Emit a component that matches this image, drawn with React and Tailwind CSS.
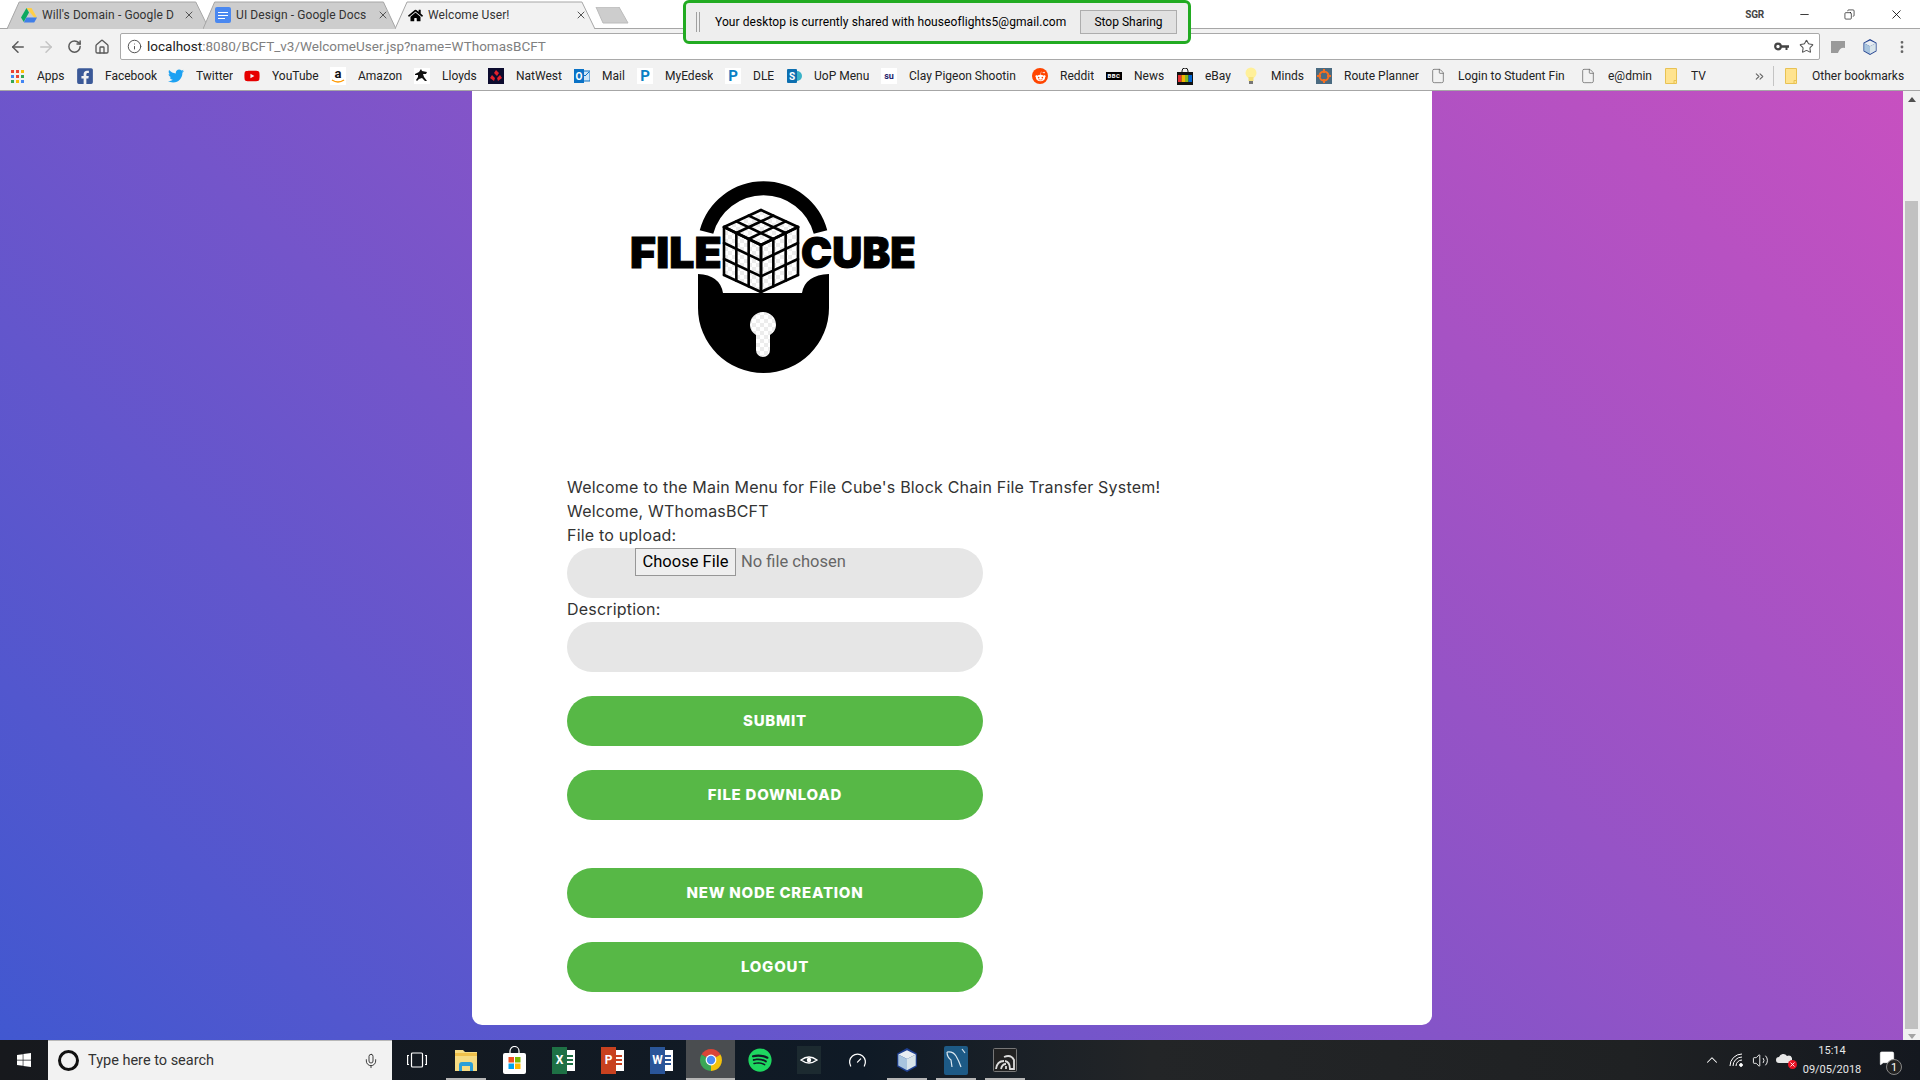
import React from 'react';
import {
  ArrowLeft, ArrowRight, RotateCw, Home, Info, Star, X, Minus, Mic, ChevronUp,
  Volume2, Copy, EllipsisVertical, ChevronsRight, File, Gauge, MessageSquare,
} from 'lucide-react';
import { FaFacebookSquare, FaTwitter, FaYoutube, FaRedditAlien, FaWindows, FaSpotify, FaHome } from 'react-icons/fa';

const DriveIcon = () => (
  <svg width="16" height="15" viewBox="0 0 16 15">
    <polygon points="5.5,0 10.5,0 16,9.5 13.2,9.5" fill="#ffcf48" />
    <polygon points="5.5,0 8,4.6 2.8,14 0,9.5" fill="#0da960" />
    <polygon points="2.8,14.5 5.4,9.5 16,9.5 13.2,14.5" fill="#3f7ee8" />
  </svg>
);

const DocsIcon = () => (
  <div className="w-4 h-4 rounded-[2px] bg-[#4a88f0] flex flex-col gap-[2px] justify-center px-[3px]">
    <div className="h-px bg-white" />
    <div className="h-px bg-white" />
    <div className="h-px bg-white w-2/3" />
  </div>
);

const AppsIcon = () => {
  const cols = ['#ea4335', '#ea4335', '#fbbc05', '#4285f4', '#ea4335', '#34a853', '#34a853', '#fbbc05', '#4285f4'];
  return (
    <div className="w-[13px] h-[13px] grid grid-cols-3 gap-[2px]">
      {cols.map((c, i) => (
        <svg key={i} width="3" height="3"><rect width="3" height="3" fill={c} /></svg>
      ))}
    </div>
  );
};

const Badge = ({ className, children }) => (
  <div className={`w-4 h-4 flex items-center justify-center font-bold leading-none ${className}`}>{children}</div>
);

const AmazonIcon = () => (
  <svg width="16" height="18" viewBox="0 0 16 18">
    <rect width="16" height="18" fill="#fff" />
    <text x="8" y="11" textAnchor="middle" fontSize="13" fontWeight="700" fill="#111" fontFamily="Roboto, sans-serif">a</text>
    <path d="M2 13q6 4 12 0" fill="none" stroke="#f90" strokeWidth="1.5" />
  </svg>
);

const LloydsIcon = () => (
  <svg width="16" height="16" viewBox="0 0 16 16">
    <rect width="16" height="16" fill="#fff" />
    <path d="M1 6l4-2 2-3 1 2 5 1-1 2-3 0 1 3 3 4-2 0-3-3-3 1-2 2-1-1 2-3 0-2-3 0z" fill="#111" />
  </svg>
);

const NatWestIcon = () => (
  <svg width="16" height="16" viewBox="0 0 16 16">
    <rect width="16" height="16" fill="#0c0b2e" />
    <path d="M8 2l3 3-2 3-3-3zM4 7l3 3-1 3-4-3zM12 7l2 3-4 3-1-3z" fill="#e4202c" />
  </svg>
);

const ShareIcon = () => (
  <svg width="16" height="16" viewBox="0 0 16 16">
    <circle cx="11" cy="8" r="5" fill="#3ab2c8" />
    <rect x="1" y="1" width="10" height="14" rx="1" fill="#0d6fb0" />
    <text x="6" y="12" textAnchor="middle" fontSize="10" fontWeight="700" fill="#fff" fontFamily="Roboto, sans-serif">S</text>
  </svg>
);

const OutlookIcon = () => (
  <svg width="16" height="16" viewBox="0 0 16 16">
    <rect x="6" y="3" width="10" height="10" fill="#cfe6f7" stroke="#0a72c6" />
    <path d="M7 4l4 4 4-4" fill="none" stroke="#0a72c6" />
    <rect y="1" width="10" height="14" fill="#0a72c6" />
    <text x="5" y="12" textAnchor="middle" fontSize="10" fontWeight="700" fill="#fff" fontFamily="Roboto, sans-serif">O</text>
  </svg>
);

const BbcIcon = () => (
  <div className="w-4 h-2 bg-black flex items-center justify-center text-white text-[6px] font-bold leading-none tracking-[0.5px]">BBC</div>
);

const BagIcon = () => (
  <svg width="16" height="17" viewBox="0 0 16 17">
    <path d="M5 5V3a3 3 0 0 1 6 0v2" stroke="#111" fill="none" />
    <rect y="4" width="16" height="13" fill="#111" />
    <rect x="1" y="7" width="3.5" height="7" fill="#e53238" />
    <rect x="4.5" y="7" width="3.5" height="7" fill="#f5af02" />
    <rect x="8" y="7" width="3.5" height="7" fill="#86b817" />
    <rect x="11.5" y="7" width="3.5" height="7" fill="#0064d2" />
  </svg>
);

const BulbIcon = () => (
  <svg width="12" height="18" viewBox="0 0 12 18">
    <circle cx="6" cy="6" r="5.5" fill="#fff09a" />
    <rect x="3.5" y="10" width="5" height="4" fill="#f6e27a" />
    <rect x="4" y="14" width="4" height="3" fill="#777" />
  </svg>
);

const RouteIcon = () => (
  <svg width="16" height="16" viewBox="0 0 16 16">
    <rect width="16" height="16" fill="#4a6a80" />
    <circle cx="8" cy="8" r="4.5" fill="none" stroke="#f36f21" strokeWidth="2" />
    <path d="M8 1v4M8 11v4M1 8h4M11 8h4" stroke="#f36f21" strokeWidth="2" />
  </svg>
);

const YellowFolder = () => (
  <svg width="12" height="16" viewBox="0 0 12 16">
    <path d="M.5.5h11v15H.5z" fill="#ffe38f" stroke="#e8c254" />
    <path d="M9 15.5v-3h2.5" fill="none" stroke="#e8c254" />
  </svg>
);
const PageIcon = () => <File size={16} strokeWidth={1} className="text-[#555]" />;

const KeyIcon = () => (
  <svg width="15" height="9" viewBox="0 0 15 9">
    <circle cx="4" cy="4.5" r="2.8" fill="none" stroke="#444" strokeWidth="2.2" />
    <path d="M6.5 3.2H15V5.8H13.5V8H11.5V5.8H6.5z" fill="#444" />
  </svg>
);

// icon column + label, widths are the distance to the next bookmark
const bookmarks = [
  { label: 'Apps', w: 'w-[68px]', icon: <AppsIcon /> },
  { label: 'Facebook', w: 'w-[91px]', icon: <FaFacebookSquare size={18} className="text-[#3b5998]" /> },
  { label: 'Twitter', w: 'w-[76px]', icon: <FaTwitter size={16} className="text-[#1da1f2]" /> },
  { label: 'YouTube', w: 'w-[86px]', icon: <FaYoutube size={16} className="text-[#e60000]" /> },
  { label: 'Amazon', w: 'w-[84px]', icon: <AmazonIcon /> },
  { label: 'Lloyds', w: 'w-[74px]', icon: <LloydsIcon /> },
  { label: 'NatWest', w: 'w-[86px]', icon: <NatWestIcon /> },
  { label: 'Mail', w: 'w-[63px]', icon: <OutlookIcon /> },
  { label: 'MyEdesk', w: 'w-[88px]', icon: <Badge className="bg-white text-[#0a7fc4] text-[15px]">P</Badge> },
  { label: 'DLE', w: 'w-[61px]', icon: <Badge className="bg-white text-[#0a7fc4] text-[15px]">P</Badge> },
  { label: 'UoP Menu', w: 'w-[95px]', icon: <ShareIcon /> },
  { label: 'Clay Pigeon Shootin', w: 'w-[151px]', icon: <Badge className="bg-white text-[#1c1c6b] text-[9px]">su</Badge> },
  { label: 'Reddit', w: 'w-[74px]', icon: <Badge className="bg-[#ff4500] rounded-full text-white"><FaRedditAlien size={11} /></Badge> },
  { label: 'News', w: 'w-[71px]', icon: <BbcIcon /> },
  { label: 'eBay', w: 'w-[66px]', icon: <BagIcon /> },
  { label: 'Minds', w: 'w-[73px]', icon: <BulbIcon /> },
  { label: 'Route Planner', w: 'w-[114px]', icon: <RouteIcon /> },
  { label: 'Login to Student Fin', w: 'w-[150px]', icon: <PageIcon /> },
  { label: 'e@dmin', w: 'w-[83px]', icon: <PageIcon /> },
  { label: 'TV', w: 'w-[70px]', icon: <YellowFolder /> },
];

const TabShape = ({ active }) => (
  <svg className="absolute inset-0 w-full h-full" viewBox="0 0 200 28" preserveAspectRatio="none">
    <path
      d="M0 28 L12 1 L186 1 L199 28"
      fill={active ? '#f2f2f2' : '#cdcdcd'}
      stroke="#a6a6a6"
      strokeWidth="1"
      vectorEffect="non-scaling-stroke"
    />
  </svg>
);

const Tab = ({ className, pad, icon, title, textW, active, closePad }) => (
  <div className={`relative h-[28px] shrink-0 ${className}`}>
    <TabShape active={active} />
    <div className={`relative h-full flex items-center text-[12px] text-[#333] ${pad}`}>
      <div className="w-4 h-4 flex items-center justify-center shrink-0">{icon}</div>
      <span className={`ml-[5px] whitespace-nowrap overflow-hidden tracking-[0.1px] ${textW}`}>{title}</span>
      <X size={12} strokeWidth={2} className={`text-[#555] shrink-0 ${closePad}`} />
    </div>
  </div>
);

const ShareBar = () => (
  <div className="absolute left-[683px] top-0 w-[508px] h-[44px] z-10 bg-[#eeeeee] border-[3px] border-[#22ab22] rounded-[6px] flex items-center font-['Roboto',sans-serif] text-[12px] text-black">
    <div className="ml-[10px] w-[4px] h-[20px] border-x border-[#a0a0a0]" />
    <span className="ml-[15px] w-[364px] whitespace-nowrap tracking-[0.08px]">Your desktop is currently shared with houseoflights5@gmail.com</span>
    <button className="ml-[1px] w-[97px] h-[24px] bg-[#e1e1e1] border border-[#adadad]">Stop Sharing</button>
  </div>
);

const TitleBar = () => (
  <div className="relative h-[29px] shrink-0 bg-white border-b border-[#a6a6a6] flex font-['Roboto',sans-serif]">
    <div className="flex pl-[7px] pt-px">
      <Tab className="w-[203px]" pad="pl-[14px]" icon={<DriveIcon />} title="Will's Domain - Google D" textW="w-[133px]" closePad="ml-[8px]" />
      <Tab className="w-[194px] -ml-[7px]" pad="pl-[12px]" icon={<DocsIcon />} title="UI Design - Google Docs" textW="w-[130px]" closePad="ml-[11px]" />
      <Tab className="w-[201px] -ml-[2px]" pad="pl-[12px]" active icon={<FaHome size={15} className="text-black" />} title="Welcome User!" textW="w-[141px]" closePad="ml-[6px]" />
      {/* new tab button */}
      <svg width="34" height="17" viewBox="0 0 34 17" className="-ml-px mt-[6px]">
        <path d="M1 0H24L33 16H8Z" fill="#cdcdcd" stroke="#bbb" />
      </svg>
    </div>
    <div className="ml-auto flex items-center">
      <span className="mr-[34px] text-[10px] font-bold text-[#444] tracking-tight">SGR</span>
      <Minus size={13} strokeWidth={1.4} className="text-black mr-[33px]" />
      <Copy size={11} strokeWidth={1.4} className="text-black mr-[34px] -scale-x-100" />
      <X size={15} strokeWidth={1.3} className="text-black mr-[16px]" />
    </div>
  </div>
);

const Toolbar = () => (
  <div className="h-[31px] shrink-0 bg-[#f2f2f2] flex items-center pl-[4px] pt-[4px] font-['Roboto',sans-serif]">
    <div className="w-7 flex justify-center"><ArrowLeft size={18} strokeWidth={2} className="text-[#5a5a5a]" /></div>
    <div className="w-7 flex justify-center"><ArrowRight size={18} strokeWidth={2} className="text-[#c4c4c4]" /></div>
    <div className="w-7 flex justify-center"><RotateCw size={15} strokeWidth={2.4} className="text-[#5a5a5a]" /></div>
    <div className="w-7 flex justify-center"><Home size={16} strokeWidth={2} className="text-[#5a5a5a]" /></div>
    <div className="ml-[4px] w-[1700px] h-[27px] bg-white border border-[#a9a9a9] rounded-[2px] flex items-center pl-[6px] pr-[5px]">
      <Info size={15} strokeWidth={1.6} className="text-[#555]" />
      <span className="ml-[5px] text-[13.5px] text-[#222] whitespace-nowrap">localhost<span className="text-[#808080]">:8080/BCFT_v3/WelcomeUser.jsp?name=WThomasBCFT</span></span>
      <div className="ml-auto"><KeyIcon /></div>
      <Star size={15} strokeWidth={1.7} className="ml-[10px] text-[#555]" />
    </div>
    <svg width="16" height="16" viewBox="0 0 16 16" className="ml-[10px]">
      <path d="M1 2h14v7q-5-1-7 5H1z" fill="#9a9a9a" />
    </svg>
    <CubeAppIcon className="ml-[16px]" size={16} />
    <EllipsisVertical size={16} strokeWidth={2.2} className="ml-[16px] text-[#666]" />
  </div>
);

const Bookmarks = () => (
  <div className="h-[31px] shrink-0 bg-[#f2f2f2] border-b border-[#a6a6a6] flex items-center pl-[9px] pt-[2px] text-[12px] text-[#222] font-['Roboto',sans-serif]">
    {bookmarks.map(b => (
      <div key={b.label} className={`${b.w} shrink-0 flex items-center`}>
        <div className="w-4 h-4 flex items-center justify-center shrink-0">{b.icon}</div>
        <span className="ml-[12px] whitespace-nowrap overflow-hidden">{b.label}</span>
      </div>
    ))}
    <ChevronsRight size={13} className="ml-[20px] text-[#666]" />
    <div className="ml-[7px] w-px h-[20px] bg-[#c4c4c4]" />
    <div className="ml-[11px]"><YellowFolder /></div>
    <span className="ml-[15px] whitespace-nowrap">Other bookmarks</span>
  </div>
);

const LogoMark = () => {
  const lerp = (a, b, t) => [a[0] + (b[0] - a[0]) * t, a[1] + (b[1] - a[1]) * t];
  const top = [141, 35];
  const right = [178, 52];
  const left = [104, 52];
  const mid = [141, 70];
  const lb = [104, 100];
  const rb = [178, 100];
  const bot = [141, 117];
  const grid = (a, b, c, d) =>
    [0, 1, 2, 3].flatMap(i => {
      const t = i / 3;
      return [
        [lerp(a, b, t), lerp(d, c, t)],
        [lerp(a, d, t), lerp(b, c, t)],
      ];
    });
  const lines = [...grid(top, right, mid, left), ...grid(left, mid, bot, lb), ...grid(mid, right, rb, bot)];
  return (
    <svg width="305" height="205" viewBox="0 0 305 205">
      <defs>
        <pattern id="checker" width="8" height="8" patternUnits="userSpaceOnUse">
          <rect width="8" height="8" fill="#ffffff" />
          <rect width="4" height="4" fill="#ececec" />
          <rect x="4" y="4" width="4" height="4" fill="#ececec" />
        </pattern>
      </defs>
      {/* shackle */}
      <path d="M86.5 57 A59 59 0 0 1 200.5 57" fill="none" stroke="#000" strokeWidth="14" />
      {/* lock body */}
      <path d="M78 99 Q100 100 103 118 L182 118 Q185 100 209 99 L209 133 A65.5 65 0 0 1 78 133 Z" fill="#000" />
      <path d="M130 150 a13 13 0 0 1 26 0 q0 6 -6 10 l0 15 a7 7 0 0 1 -14 0 l0 -15 q-6 -4 -6 -10z" fill="url(#checker)" />
      {/* cube */}
      <polygon points="141,35 178,52 178,100 141,117 104,100 104,52" fill="url(#checker)" />
      {lines.map((l, i) => (
        <line key={i} x1={l[0][0]} y1={l[0][1]} x2={l[1][0]} y2={l[1][1]} stroke="#000" strokeWidth="2.6" strokeLinecap="round" />
      ))}
      <text x="10" y="93" fontFamily="Inter, sans-serif" fontWeight="900" fontSize="42" stroke="#000" strokeWidth="1" textLength="92" lengthAdjust="spacingAndGlyphs">FILE</text>
      <text x="181" y="93" fontFamily="Inter, sans-serif" fontWeight="900" fontSize="42" stroke="#000" strokeWidth="1" textLength="115" lengthAdjust="spacingAndGlyphs">CUBE</text>
    </svg>
  );
};

const GreenButton = ({ className, children }) => (
  <button className={`block w-[416px] h-[50px] rounded-[25px] bg-[#57b846] text-white text-[15px] font-extrabold uppercase tracking-[0.05em] font-['Inter',sans-serif] ${className}`}>
    {children}
  </button>
);

const Card = () => (
  <div className="w-[960px] h-[934px] shrink-0 bg-white rounded-b-[10px] pt-[84px] text-[#333] text-[16px] leading-[24px] font-['Inter',sans-serif] tracking-[0.012em]">
    <div className="pl-[148px]"><LogoMark /></div>
    <div className="pl-[95px] mt-[95px]">
      <div className="whitespace-nowrap">Welcome to the Main Menu for File Cube's Block Chain File Transfer System!</div>
      <div>Welcome, WThomasBCFT</div>
      <div>File to upload:</div>
      <div className="w-[416px] h-[50px] mt-px rounded-[25px] bg-[#e6e6e6] pl-[68px] flex items-start text-[16.5px] font-['Roboto',sans-serif] tracking-normal">
        <button className="w-[101px] h-[28px] bg-[#efefef] border border-[#979797] text-black leading-none">Choose File</button>
        <span className="ml-[5px] mt-[2px] text-[#666]">No file chosen</span>
      </div>
      <div className="-mt-px mb-px">Description:</div>
      <div className="w-[416px] h-[50px] rounded-[25px] bg-[#e6e6e6]" />
      <GreenButton className="mt-[24px]">Submit</GreenButton>
      <GreenButton className="mt-[24px]">File Download</GreenButton>
      <GreenButton className="mt-[48px]">New Node Creation</GreenButton>
      <GreenButton className="mt-[24px]">Logout</GreenButton>
    </div>
  </div>
);

const Scrollbar = () => (
  <div className="w-[17px] -ml-px shrink-0 bg-[#f1f1f1] flex flex-col items-center">
    <svg width="8" height="5" viewBox="0 0 8 5" className="mt-[6px] shrink-0"><path d="M4 0l4 5H0z" fill="#505050" /></svg>
    <div className="w-[13px] h-[828px] mt-[99px] bg-[#c1c1c1]" />
    <svg width="8" height="5" viewBox="0 0 8 5" className="mt-[5px] shrink-0"><path d="M4 5L8 0H0z" fill="#a3a3a3" /></svg>
  </div>
);

const CubeAppIcon = ({ className, size }) => (
  <svg width={size} height={size} viewBox="0 0 20 22" className={className}>
    <polygon points="10,0 19,5 19,17 10,22 1,17 1,5" fill="#1f3f8f" />
    <polygon points="10,2 18,6 10,10 2,6" fill="#e8edf2" />
    <polygon points="2,6 10,10 10,20.5 2,16" fill="#a8c4de" />
    <polygon points="18,6 10,10 10,20.5 18,16" fill="#d8e4ea" />
  </svg>
);

const OfficeIcon = ({ bg, letter }) => (
  <div className="relative w-[23px] h-[27px] flex items-center">
    <div className="absolute right-0 w-[12px] h-[21px] bg-white flex flex-col justify-center gap-[2px] px-[2px]">
      <div className={`h-[2px] ${bg}`} />
      <div className={`h-[2px] ${bg}`} />
      <div className={`h-[2px] ${bg}`} />
    </div>
    <div className={`relative w-[15px] h-[27px] ${bg} text-white text-[12px] font-bold flex items-center justify-center font-['Roboto',sans-serif]`}>{letter}</div>
  </div>
);

const ChromeIcon = () => (
  <svg width="24" height="28" viewBox="0 0 24 24">
    <path d="M12 12L2.5 6.5A11 11 0 0 1 21.5 6.5Z" fill="#db4437" />
    <path d="M12 12L21.5 6.5A11 11 0 0 1 12 23Z" fill="#f4c20d" />
    <path d="M12 12L12 23A11 11 0 0 1 2.5 6.5Z" fill="#3aa757" />
    <circle cx="12" cy="12" r="5.4" fill="#fff" />
    <circle cx="12" cy="12" r="4.2" fill="#4c8bf5" />
  </svg>
);

const slots = [
  { key: 'view', icon: (
    <svg width="20" height="16" viewBox="0 0 20 16" fill="none" stroke="#fff" strokeWidth="1.2">
      <rect x="4.5" y="1" width="11" height="14" rx="1" />
      <path d="M2 3.5H.6v9H2M18 3.5h1.4v9H18" />
    </svg>
  ) },
  { key: 'explorer', bar: 'w-[40px]', icon: (
    <svg width="22" height="22" viewBox="0 0 22 22">
      <path d="M0 1h8l2 2h12v19H0z" fill="#f7dc83" />
      <rect y="4" width="22" height="3" fill="#f0c14b" />
      <path d="M4 22v-6q0-3 3-3h8q3 0 3 3v6h-3v-5H7v5z" fill="#2b9fd8" />
    </svg>
  ) },
  { key: 'store', icon: (
    <svg width="23" height="28" viewBox="0 0 23 28">
      <path d="M7 8V5a4.5 4.5 0 0 1 9 0v3" fill="none" stroke="#fff" strokeWidth="1.2" />
      <rect y="7" width="23" height="21" rx="2" fill="#fff" />
      <rect x="5.5" y="11" width="5.5" height="5.5" fill="#f25022" />
      <rect x="12" y="11" width="5.5" height="5.5" fill="#7fba00" />
      <rect x="5.5" y="17.5" width="5.5" height="5.5" fill="#00a4ef" />
      <rect x="12" y="17.5" width="5.5" height="5.5" fill="#ffb900" />
    </svg>
  ) },
  { key: 'excel', icon: <OfficeIcon bg="bg-[#1e7145]" letter="X" /> },
  { key: 'ppt', icon: <OfficeIcon bg="bg-[#c8411f]" letter="P" /> },
  { key: 'word', icon: <OfficeIcon bg="bg-[#2a5599]" letter="W" /> },
  { key: 'chrome', active: true, bar: 'w-full', icon: <ChromeIcon /> },
  { key: 'spotify', icon: <FaSpotify size={24} className="text-[#1ed760]" /> },
  { key: 'halo', icon: (
    <div className="w-[24px] h-[28px] bg-[#1c2a30] flex items-center justify-center">
      <svg width="18" height="10" viewBox="0 0 18 10" fill="none" stroke="#fff" strokeWidth="1.4">
        <path d="M1 5q8-6 16 0q-8 6-16 0z" />
        <circle cx="9" cy="5" r="1.5" fill="#fff" />
      </svg>
    </div>
  ) },
  { key: 'gauge', icon: <Gauge size={19} strokeWidth={1.6} className="text-white" /> },
  { key: 'cube', bar: 'w-[40px]', icon: <CubeAppIcon size={24} /> },
  { key: 'mysql', bar: 'w-[40px]', icon: (
    <svg width="24" height="29" viewBox="0 0 24 29">
      <rect width="24" height="29" rx="2" fill="#1d5a86" />
      <path d="M3 6q6-1 9 4t5 11M3 6q0 5 4 8l1 7M18 3l3 4" fill="none" stroke="#dce8f0" strokeWidth="1.2" />
    </svg>
  ) },
  { key: 'nvidia', bar: 'w-[40px]', icon: (
    <svg width="24" height="24" viewBox="0 0 24 24">
      <rect x="0.5" y="0.5" width="23" height="23" rx="1" fill="#222" stroke="#777" />
      <path d="M3 21q1-8 8-8M8 21q1-5 5-5M13 21v-3M11 9q7-3 10 3v9h-4q0-7-5-8" fill="none" stroke="#ddd" strokeWidth="1.8" />
    </svg>
  ) },
];

const Taskbar = () => (
  <div className="h-[40px] shrink-0 bg-[linear-gradient(90deg,#17191d,#0f1a26_45%,#232527_60%,#1f2123_85%,#14181f)] flex items-stretch text-white font-['Roboto',sans-serif]">
    <div className="w-[48px] flex items-center justify-center"><FaWindows size={16} /></div>
    <div className="w-[344px] bg-[#f2f2f2] border-t border-[#b8b8b8] flex items-center pl-[10px] text-[#333] text-[14.5px]">
      <div className="w-[21px] h-[21px] rounded-full border-[3px] border-[#111]" />
      <span className="ml-[9px]">Type here to search</span>
      <Mic size={16} strokeWidth={1.4} className="ml-auto mr-[13px]" />
    </div>
    {slots.map(s => (
      <div key={s.key} className={`relative w-[49px] flex items-center justify-center ${s.active ? 'bg-[#4a4d50]' : ''}`}>
        {s.icon}
        {s.bar && <div className={`absolute bottom-0 h-[2px] bg-[#b5b5b5] ${s.bar}`} />}
      </div>
    ))}
    <div className="ml-auto flex items-center">
      <ChevronUp size={18} strokeWidth={1.4} />
      <svg width="16" height="14" viewBox="0 0 16 14" fill="none" stroke="#fff" strokeWidth="1" className="ml-[8px]">
        <path d="M1 13A12 12 0 0 1 13 1M4 13A9 9 0 0 1 13 4M7 13A6 6 0 0 1 13 7" />
        <circle cx="12" cy="12" r="1.4" fill="#fff" />
      </svg>
      <Volume2 size={17} strokeWidth={1.3} className="ml-[7px]" />
      <div className="relative ml-[7px] w-[16px] h-[14px]">
        <svg width="16" height="10" viewBox="0 0 16 10"><path d="M3 10a3 3 0 0 1 0-6 4.5 4.5 0 0 1 8-1 3.5 3.5 0 0 1 3 7z" fill="#e8e8e8" /></svg>
        <div className="absolute -right-[5px] -bottom-[2px] w-[9px] h-[9px] rounded-full bg-[#e81123] flex items-center justify-center"><X size={7} strokeWidth={3} /></div>
      </div>
      <div className="ml-[5px] w-[70px] flex flex-col items-center text-[11px] leading-[19px] text-[#e8e8e8]">
        <span>15:14</span>
        <span>09/05/2018</span>
      </div>
      <div className="relative ml-[12px] mr-[25px] w-[16px] h-[16px] -mt-[4px]">
        <MessageSquare size={16} strokeWidth={1} className="text-white fill-white" />
        <div className="absolute -right-[7px] -bottom-[9px] w-[16px] h-[16px] rounded-full border border-[#888] bg-[#222] text-[11px] leading-none flex items-center justify-center">1</div>
      </div>
    </div>
  </div>
);

export default function App() {
  return (
    <div className="relative h-screen w-full overflow-hidden flex flex-col">
      <ShareBar />
      <TitleBar />
      <Toolbar />
      <Bookmarks />
      <div className="flex-1 min-h-0 flex bg-[linear-gradient(45deg,#4158d0,#c850c0)]">
        <div className="flex-1 flex justify-center"><Card /></div>
        <Scrollbar />
      </div>
      <Taskbar />
    </div>
  );
}
